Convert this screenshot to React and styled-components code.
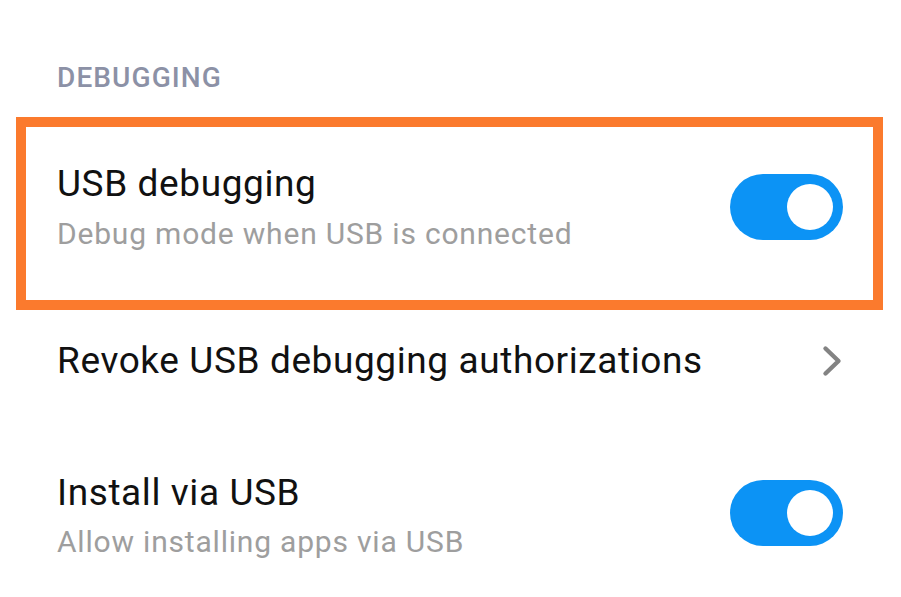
import React from "react";
import styled, { createGlobalStyle } from "styled-components";

const Global = createGlobalStyle`
  html, body { margin: 0; padding: 0; background: #ffffff; }
  body { font-family: Roboto, "Noto Sans", "Liberation Sans", sans-serif; }
  * { box-sizing: border-box; }
`;

const Page = styled.div`
  width: 901px;
  height: 597px;
  overflow: hidden;
  background: #ffffff;
  padding-top: 61px;
`;

const SectionHeader = styled.div`
  padding: 0 58px 0 57px;
  font-size: 28px;
  line-height: 34px;
  font-weight: 500;
  color: #8c91a6;
  letter-spacing: 1.1px;
  margin-bottom: 22px;
`;

const Row = styled.div`
  display: flex;
  align-items: center;
  justify-content: space-between;
  gap: 24px;
  padding: ${(p) => p.$pt}px 58px ${(p) => p.$pb}px 57px;
`;

const HighlightRow = styled(Row)`
  margin: 0 18px 0 16px;
  border: 10px solid #fb7a2d;
  padding: ${(p) => p.$pt}px 30px ${(p) => p.$pb}px 31px;
`;

const TextCol = styled.div`
  display: flex;
  flex-direction: column;
  gap: ${(p) => p.$gap || 0}px;
`;

const Title = styled.div`
  font-size: 37px;
  line-height: 44px;
  color: #111111;
  letter-spacing: 0.6px;
  white-space: nowrap;
`;

const Subtitle = styled.div`
  font-size: 30px;
  line-height: 36px;
  color: #9e9e9e;
  letter-spacing: 0.8px;
  white-space: nowrap;
`;

const Track = styled.div`
  flex: none;
  width: 113px;
  height: 66px;
  border-radius: 33px;
  background: #0c93f5;
  display: flex;
  align-items: center;
  justify-content: flex-end;
  padding-right: 10px;
  margin-top: ${(p) => p.$shift || 0}px;
`;

const Knob = styled.div`
  width: 46px;
  height: 46px;
  border-radius: 50%;
  background: #ffffff;
`;

const Chevron = styled.svg`
  flex: none;
  width: 20px;
  height: 32px;
  margin-right: 1px;
`;

function Toggle({ shift }) {
  return (
    <Track $shift={shift}>
      <Knob />
    </Track>
  );
}

export default function App() {
  return (
    <>
      <Global />
      <Page>
        <SectionHeader>DEBUGGING</SectionHeader>
        <HighlightRow $pt={35} $pb={48}>
          <TextCol $gap={10}>
            <Title>USB debugging</Title>
            <Subtitle>Debug mode when USB is connected</Subtitle>
          </TextCol>
          <Toggle shift={-1} />
        </HighlightRow>
        <Row $pt={29} $pb={44}>
          <Title>Revoke USB debugging authorizations</Title>
          <Chevron viewBox="0 0 20 32">
            <polyline
              points="3.5,3.5 16.5,16 3.5,28.5"
              fill="none"
              stroke="#838383"
              strokeWidth="4.4"
              strokeLinecap="round"
              strokeLinejoin="round"
            />
          </Chevron>
        </Row>
        <Row $pt={44} $pb={30}>
          <TextCol $gap={9}>
            <Title>Install via USB</Title>
            <Subtitle>Allow installing apps via USB</Subtitle>
          </TextCol>
          <Toggle shift={-6} />
        </Row>
      </Page>
    </>
  );
}
